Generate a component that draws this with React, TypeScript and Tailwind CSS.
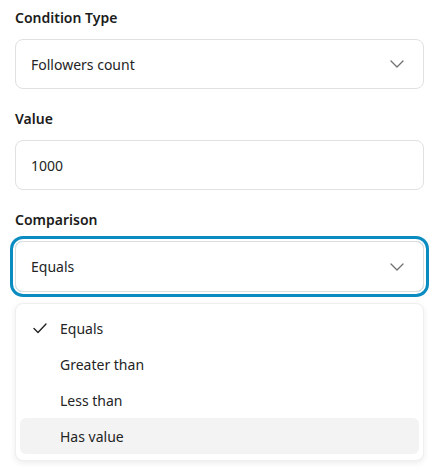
import React from "react";

const font = { fontFamily: '"Noto Sans", "Open Sans", Arial, sans-serif' };

function Chevron() {
  return (
    <svg width="14" height="8" viewBox="0 0 14 8" fill="none" className="shrink-0">
      <path d="M1 1l6 6 6-6" stroke="#6f6f6f" strokeWidth="1.3" strokeLinecap="round" strokeLinejoin="round" />
    </svg>
  );
}

function CheckMark() {
  return (
    <svg width="14" height="11" viewBox="0 0 14 11" fill="none">
      <path d="M1 5.6l4 4L13 1" stroke="#242424" strokeWidth="1.4" strokeLinecap="round" strokeLinejoin="round" />
    </svg>
  );
}

function Label({ children }: { children: React.ReactNode }) {
  return <div className="h-5 text-[14px] leading-5 font-semibold text-[#1b1b1b]">{children}</div>;
}

const options = ["Equals", "Greater than", "Less than", "Has value"];

export default function App() {
  return (
    <div className="min-h-screen bg-white px-[15px] pt-2" style={font}>
      <div className="flex w-[409px] flex-col gap-5">
        <div className="flex flex-col gap-[11px]">
          <Label>Condition Type</Label>
          <div className="flex h-[50px] items-center justify-between rounded-lg border border-[#e1e1e1] pl-[15px] pr-[19px] text-[14px] text-[#242424]">
            <span>Followers count</span>
            <Chevron />
          </div>
        </div>

        <div className="flex flex-col gap-[11px]">
          <Label>Value</Label>
          <div className="flex h-[50px] items-center rounded-lg border border-[#e1e1e1] px-[15px] text-[14px] text-[#242424]">
            1000
          </div>
        </div>

        <div className="flex flex-col gap-[11px]">
          <Label>Comparison</Label>
          <div className="flex h-[51px] items-center justify-between rounded-lg border border-[#dedede] pl-[15px] pr-[19px] text-[14px] text-[#242424] ring-[3px] ring-[#0b8cc1] ring-offset-2 ring-offset-white">
            <span>Equals</span>
            <Chevron />
          </div>
          <div className="flex flex-col rounded-lg border border-[#efefef] bg-white px-1 py-[6px] shadow-[0_2px_6px_rgba(0,0,0,0.08)]">
            {options.map((o, i) => (
              <div
                key={o}
                className={`relative flex h-9 items-center rounded-md pl-10 text-[14px] text-[#242424] ${
                  i === 3 ? "bg-[#f3f3f3]" : ""
                }`}
              >
                {i === 0 && (
                  <span className="absolute left-[13px] top-[13px] flex">
                    <CheckMark />
                  </span>
                )}
                {o}
              </div>
            ))}
          </div>
        </div>
      </div>
    </div>
  );
}
